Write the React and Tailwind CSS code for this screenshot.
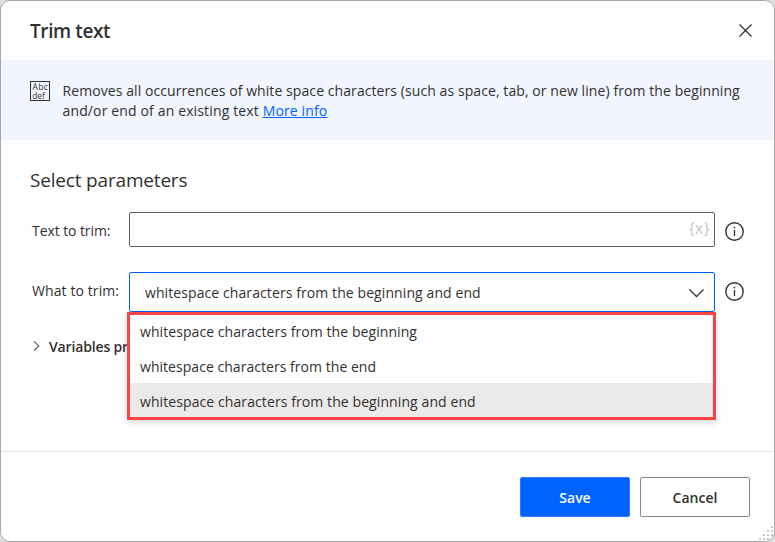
import React from 'react';

const options = [
  'whitespace characters from the beginning',
  'whitespace characters from the end',
  'whitespace characters from the beginning and end',
];

const rowStyles = [
  'flex h-[33px] items-center pl-[10px] tracking-[0.07px]',
  'flex h-[35px] items-center pl-[10px] pt-[2px] tracking-[0.04px]',
  'flex h-[34px] items-center bg-[#ebeae9] pl-[10px] pb-px pt-[3px] tracking-[0.09px]',
];

function InfoIcon({ className }) {
  return (
    <svg className={`h-[19px] w-[19px] shrink-0 ${className}`} viewBox="0 0 19 19" fill="none">
      <circle cx="9.5" cy="9.5" r="8.7" stroke="#323130" strokeWidth="1.4" />
      <path d="M9.5 8v6" stroke="#323130" strokeWidth="1.3" />
      <circle cx="9.5" cy="5.6" r="0.9" fill="#323130" />
    </svg>
  );
}

function TextIcon() {
  return (
    <svg className="mt-[21px] h-5 w-5 shrink-0" viewBox="0 0 20 20" fill="none">
      <rect x="0.5" y="0.5" width="19" height="19" stroke="#323130" />
      <text x="2.4" y="8.8" fontSize="8.4" fill="#323130" textLength="15.4">Abc</text>
      <text x="2.2" y="17.6" fontSize="8.4" fill="#323130">def</text>
    </svg>
  );
}

function ResizeGrip() {
  return (
    <svg className="absolute bottom-0 right-0 h-4 w-4" viewBox="0 0 16 16" fill="#c0cadf">
      <path d="M13 1h2v2h-2zM9 5h2v2h-2zM13 5h2v2h-2zM5 9h2v2h-2zM9 9h2v2h-2zM13 9h2v2h-2zM1 13h2v2h-2zM5 13h2v2h-2zM9 13h2v2h-2zM13 13h2v2h-2z" />
    </svg>
  );
}

export default function App() {
  return (
    <div className="h-[542px] w-[775px] overflow-hidden bg-[#dedede] font-['Open_Sans','Noto_Sans',sans-serif] text-[14px] text-[#323130]">
      <div className="relative flex h-full flex-col overflow-hidden rounded-[10px] border border-[#a9a9a9] bg-white">
        <header className="flex h-[59px] shrink-0 items-center justify-between pl-[29px] pr-[22px]">
          <h1 className="text-[19px] font-semibold leading-6 tracking-[-0.4px]">Trim text</h1>
          <svg className="h-[13px] w-[13px]" viewBox="0 0 13 13" fill="none" stroke="#323130" strokeWidth="1.3">
            <path d="M.5 .5l12 12M12.5 .5l-12 12" />
          </svg>
        </header>

        <section className="flex h-20 shrink-0 bg-[#f0f5ff] pl-[29px]">
          <TextIcon />
          <p className="ml-[12.5px] mt-[21px] whitespace-nowrap leading-5 tracking-[0.08px]">
            Removes all occurrences of white space characters (such as space, tab, or new line) from the beginning
            <br />
            <span className="tracking-[0.14px]">
              and/or end of an existing text <a className="text-[#0062ff] underline">More info</a>
            </span>
          </p>
        </section>

        <main className="h-[311px] shrink-0 pl-[29px]">
          <h2 className="pt-7 text-[19px] leading-6 tracking-[-0.18px]">Select parameters</h2>
          <div className="mt-[20px] flex h-[35px] items-center pl-[2px]">
            <label className="w-[97px] shrink-0 whitespace-nowrap pt-[2px] tracking-[-0.08px]">Text to trim:</label>
            <div className="flex h-[35px] w-[586px] shrink-0 items-center justify-end rounded-[2px] border border-[#605e5c] pb-[4px] pr-[4px] text-[16px] tracking-[0.3px] text-[#c8c6c4]">
              {'{x}'}
            </div>
            <InfoIcon className="ml-[10px] mt-1" />
          </div>
          <div className="relative mt-[25px] flex h-10 items-center pl-[2px]">
            <label className="w-[97px] shrink-0 whitespace-nowrap pb-1 tracking-[0.1px]">What to trim:</label>
            <div className="flex h-10 w-[586px] shrink-0 items-center justify-between rounded-[2px] border border-[#0062ff] pl-[15px] pr-[10px]">
              <span className="tracking-[0.09px]">{options[2]}</span>
              <svg className="mt-[2px] h-[10px] w-4" viewBox="0 0 16 10" fill="none" stroke="#323130" strokeWidth="1.3">
                <path d="M1.5 1.5l7 7 7-7" />
              </svg>
            </div>
            <InfoIcon className="-mt-px ml-[10px]" />
            <ul className="absolute left-[97px] top-10 w-[589px] border-[3px] border-[#fd4245] bg-white shadow-[0_3px_6px_rgba(0,0,0,0.15)]">
              {options.map((text, i) => (
                <li key={text} className={rowStyles[i]}>
                  {text}
                </li>
              ))}
            </ul>
          </div>
          <div className="mt-[22px] flex h-6 items-center pl-[3px] font-semibold">
            <svg className="h-[10px] w-[7px]" viewBox="0 0 7 10" fill="none" stroke="#605e5c" strokeWidth="1.1">
              <path d="M1 .3l4.8 4.6L1 9.5" />
            </svg>
            <span className="ml-[9px] tracking-[-0.15px]">Variables produced</span>
          </div>
        </main>

        <footer className="flex flex-1 items-start justify-end gap-[10px] border-t border-[#e9e8e7] pr-[24px] pt-[25px]">
          <button className="h-10 w-[110px] rounded-[2px] border border-[#2f7dff] bg-[#0062ff] font-semibold text-white">Save</button>
          <button className="h-10 w-[110px] rounded-[2px] border border-[#8a8886] bg-white font-semibold">Cancel</button>
        </footer>
        <ResizeGrip />
      </div>
    </div>
  );
}
